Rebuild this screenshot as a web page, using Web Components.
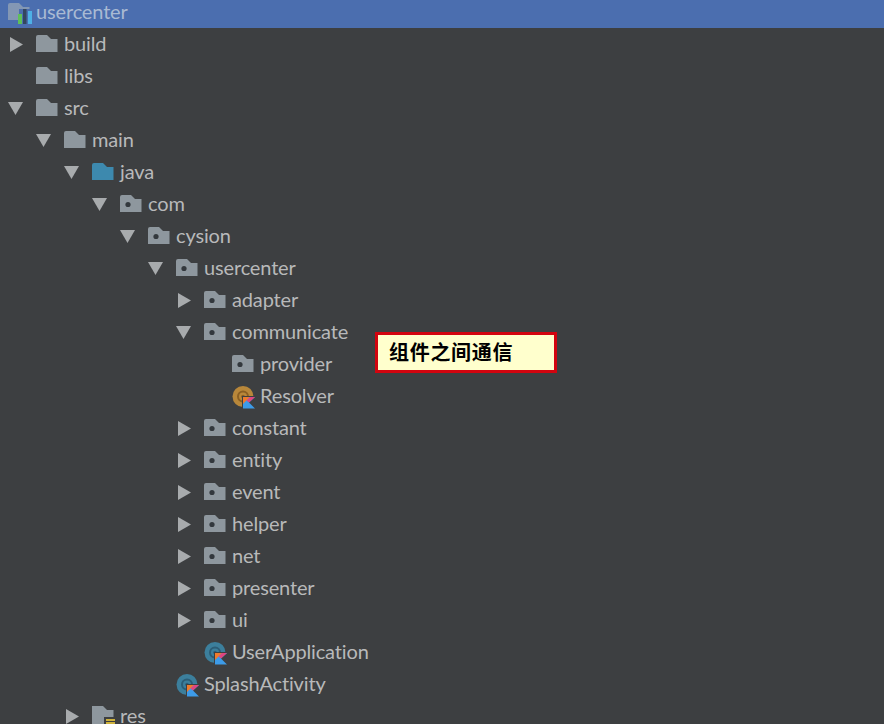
<!DOCTYPE html>
<html lang="zh"><head><meta charset="utf-8"><title>usercenter</title>
<style>
html,body{margin:0;padding:0;width:884px;height:724px;overflow:hidden;background:#3d3f41}
</style></head><body>
<project-tree>
<tree-row depth="0" icon="module" header>usercenter</tree-row>
<tree-row depth="0" arrow="right" icon="folder">build</tree-row>
<tree-row depth="0" icon="folder">libs</tree-row>
<tree-row depth="0" arrow="down" icon="folder">src</tree-row>
<tree-row depth="1" arrow="down" icon="folder">main</tree-row>
<tree-row depth="2" arrow="down" icon="source">java</tree-row>
<tree-row depth="3" arrow="down" icon="package">com</tree-row>
<tree-row depth="4" arrow="down" icon="package">cysion</tree-row>
<tree-row depth="5" arrow="down" icon="package">usercenter</tree-row>
<tree-row depth="6" arrow="right" icon="package">adapter</tree-row>
<tree-row depth="6" arrow="down" icon="package">communicate</tree-row>
<tree-row depth="7" icon="package">provider</tree-row>
<tree-row depth="7" icon="kt-orange">Resolver</tree-row>
<tree-row depth="6" arrow="right" icon="package">constant</tree-row>
<tree-row depth="6" arrow="right" icon="package">entity</tree-row>
<tree-row depth="6" arrow="right" icon="package">event</tree-row>
<tree-row depth="6" arrow="right" icon="package">helper</tree-row>
<tree-row depth="6" arrow="right" icon="package">net</tree-row>
<tree-row depth="6" arrow="right" icon="package">presenter</tree-row>
<tree-row depth="6" arrow="right" icon="package">ui</tree-row>
<tree-row depth="6" icon="kt-blue">UserApplication</tree-row>
<tree-row depth="5" icon="kt-blue">SplashActivity</tree-row>
<tree-row depth="2" arrow="right" icon="res" last>res</tree-row>
<note-label>组件之间通信</note-label>
</project-tree>
<script>
const FOLDER='M0 2Q0 0 2 0H11L15 4H21.5V17H0Z';
const kt=`<path d="M10 9H24V22H10Z" fill="#3d3f41"/><path d="M11 10H23L17 15.5L23 21.5H11Z" fill="#3d9be8"/><path d="M11 10H18L11 17Z" fill="#ef7b2c"/><path d="M18 10H23L17 15.5L14.5 13.5Z" fill="#e0457f"/>`;
const coin=(c,d)=>`<circle cx="11" cy="9.5" r="10.5" fill="${c}"/><circle cx="11" cy="9.5" r="5" fill="none" stroke="${d}" stroke-width="2"/><circle cx="11" cy="9.5" r="1.8" fill="${d}"/>`;
const ICONS={
 folder:`<path d="${FOLDER}" fill="#8e979e"/>`,
 source:`<path d="${FOLDER}" fill="#3d89ae"/>`,
 package:`<path d="${FOLDER}" fill="#8e979e"/><circle cx="8" cy="9.5" r="2.6" fill="#33383d"/>`,
 res:`<path d="M0 -1H11L15 3H21.5V20H0Z" fill="#8e979e"/><rect x="12" y="10" width="12" height="12" fill="#3d3f41"/><path d="M14 13H23M14 16H23M14 19H23" stroke="#cdb13c" stroke-width="2"/>`,
 module:`<path d="${FOLDER}" fill="#8397b4"/><rect x="11" y="6" width="14" height="13" fill="#4b6eaf"/><rect x="10" y="11" width="4" height="10" fill="#5fc05a"/><rect x="15" y="6" width="3.5" height="15" fill="#33465f"/><rect x="20" y="8" width="4" height="13" fill="#4eb1e6"/>`,
 'kt-orange':coin('#b8873a','#8a5f22')+kt,
 'kt-blue':coin('#3c7f9c','#2c5d76')+kt
};
class TreeRow extends HTMLElement{
 constructor(){super();this.attachShadow({mode:'open'})}
 connectedCallback(){
  const d=+this.getAttribute('depth')||0,a=this.getAttribute('arrow'),i=this.getAttribute('icon');
  const arrow=a==='right'?'<path d="M2 0L15 7.5L2 15Z"/>':a==='down'?'<path d="M0 1H15L7.5 14Z"/>':'';
  this.shadowRoot.innerHTML=`<style>
  :host{display:flex;align-items:center;height:32px;box-sizing:border-box;padding-left:calc(8px + 28px*var(--d));color:#b8b9ba;font:20px/24px Lato,"Liberation Sans",sans-serif;letter-spacing:-.15px;white-space:nowrap}
  :host([header]){height:28px;padding-bottom:4px;background:#4b6eaf;color:#a9bad3}
  :host([header]) .a{display:none}
  :host([last]) .t{line-height:16px}
  .a{width:16px;height:16px;margin-right:12px;margin-top:2px;fill:#a8abad;flex:none}
  .i{width:22px;height:20px;margin-right:6px;margin-top:2px;overflow:visible;flex:none}
  .t{margin-top:-3px}
  </style><svg class="a" viewBox="0 0 16 16">${arrow}</svg><svg class="i" viewBox="0 0 22 20">${ICONS[i]||''}</svg><span class="t"><slot></slot></span>`;
  this.style.setProperty('--d',d);
 }
}
class ProjectTree extends HTMLElement{
 constructor(){super();this.attachShadow({mode:'open'}).innerHTML=`<style>:host{display:block;position:relative;width:884px;height:724px;overflow:hidden;background:#3d3f41}</style><slot></slot>`}
}
class NoteLabel extends HTMLElement{
 constructor(){super();this.attachShadow({mode:'open'}).innerHTML=`<style>:host{position:absolute;left:375px;top:332px;width:182px;height:41px;box-sizing:border-box;border:3px solid #d2040f;background:#ffffcd;color:#000;padding-left:11px;font:700 20px/34px "Noto Sans CJK SC",sans-serif;letter-spacing:.7px;white-space:nowrap}</style><slot></slot>`}
}
customElements.define('tree-row',TreeRow);
customElements.define('project-tree',ProjectTree);
customElements.define('note-label',NoteLabel);
</script>
</body></html>
